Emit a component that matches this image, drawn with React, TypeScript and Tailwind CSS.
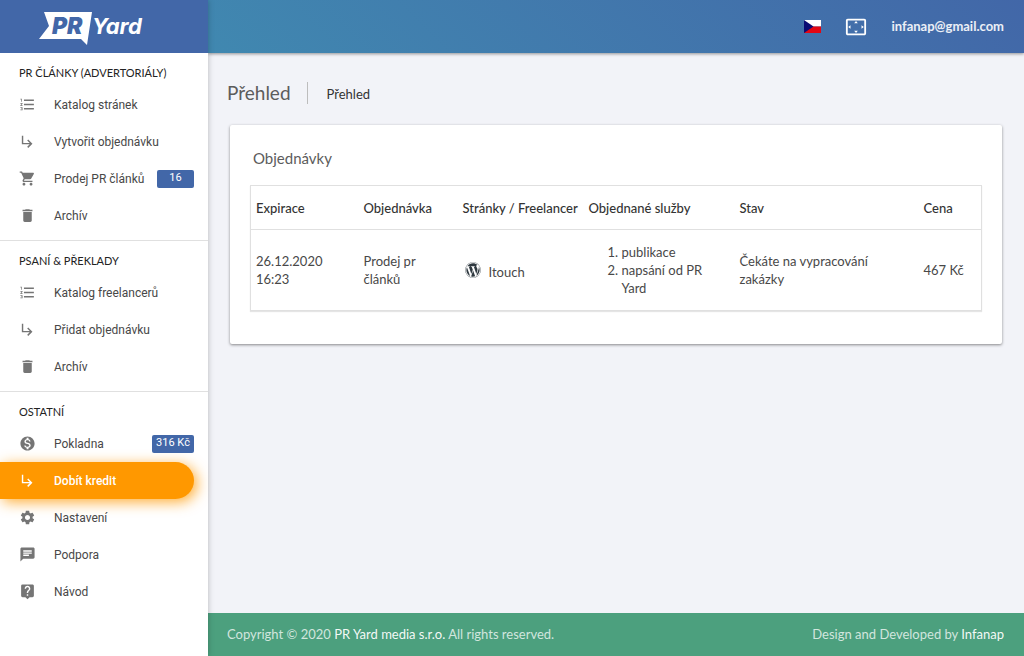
import type { ReactNode } from 'react';
import { FaWordpress } from 'react-icons/fa';
import {
  MdChat,
  MdDelete,
  MdFormatListNumbered,
  MdLiveHelp,
  MdMonetizationOn,
  MdSettings,
  MdSettingsOverscan,
  MdShoppingCart,
  MdSubdirectoryArrowRight,
} from 'react-icons/md';

interface MenuItem {
  label: string;
  icon: ReactNode;
  badge?: string;
  active?: boolean;
}

interface MenuGroup {
  title: string;
  items: MenuItem[];
}

const menu: MenuGroup[] = [
  {
    title: 'PR ČLÁNKY (ADVERTORIÁLY)',
    items: [
      { label: 'Katalog stránek', icon: <MdFormatListNumbered size={17} /> },
      { label: 'Vytvořit objednávku', icon: <MdSubdirectoryArrowRight size={17} /> },
      { label: 'Prodej PR článků', icon: <MdShoppingCart size={17} />, badge: '16' },
      { label: 'Archív', icon: <MdDelete size={17} /> },
    ],
  },
  {
    title: 'PSANÍ & PŘEKLADY',
    items: [
      { label: 'Katalog freelancerů', icon: <MdFormatListNumbered size={17} /> },
      { label: 'Přidat objednávku', icon: <MdSubdirectoryArrowRight size={17} /> },
      { label: 'Archív', icon: <MdDelete size={17} /> },
    ],
  },
  {
    title: 'OSTATNÍ',
    items: [
      { label: 'Pokladna', icon: <MdMonetizationOn size={17} />, badge: '316 Kč' },
      { label: 'Dobít kredit', icon: <MdSubdirectoryArrowRight size={17} />, active: true },
      { label: 'Nastavení', icon: <MdSettings size={17} /> },
      { label: 'Podpora', icon: <MdChat size={17} /> },
      { label: 'Návod', icon: <MdLiveHelp size={17} /> },
    ],
  },
];

function Logo() {
  return (
    <svg width="104" height="34" viewBox="0 0 104 34" role="img" aria-label="PR Yard">
      <path d="M5 0H53L48 33L42 27H0L10 14Z" fill="#fff" />
      <text x="13" y="22" fontFamily="Inter, sans-serif" fontSize="23" fontWeight="900" fontStyle="italic" fill="#4267a8">
        PR
      </text>
      <text x="53" y="22" fontFamily="Inter, sans-serif" fontSize="22" fontWeight="700" fontStyle="italic" fill="#fff">
        Yard
      </text>
    </svg>
  );
}

function CzechFlag() {
  return (
    <svg width="17" height="13" viewBox="0 0 17 13" role="img" aria-label="Čeština">
      <path d="M0 0h17v6.5H0z" fill="#fff" />
      <path d="M0 6.5h17V13H0z" fill="#e30613" />
      <path d="M0 0l9.500 6.500L0 13z" fill="#0b0b73" />
    </svg>
  );
}

function Sidebar() {
  return (
    <aside className="z-10 flex w-52 shrink-0 flex-col bg-white shadow-[0_0_6px_rgba(0,0,0,0.25)]">
      <a href="#" className="flex h-[53px] items-center bg-[#4267a8] pt-1 pl-[39px]">
        <Logo />
      </a>
      <nav className="divide-y divide-[#e0e0e0]">
        {menu.map((group) => (
          <div key={group.title} className="pb-[6px]">
            <h2 className="flex h-[33px] items-center pt-2 pl-[19px] text-[11px] text-[#222]">{group.title}</h2>
            <ul className="font-['Roboto','Open_Sans',sans-serif]">
              {group.items.map((item) => (
                <li key={item.label}>
                  <a
                    href="#"
                    className={
                      item.active
                        ? 'mr-[14px] flex h-[37px] items-center rounded-r-full bg-[#ff9800] pl-[19px] text-[12px] font-medium text-white shadow-[3px_3px_14px_rgba(255,152,0,0.8)]'
                        : 'mr-[14px] flex h-[37px] items-center pl-[19px] text-[12px] text-[#484848]'
                    }
                  >
                    <span className={item.active ? 'w-[35px] text-white' : 'w-[35px] text-[#757575]'}>{item.icon}</span>
                    {item.label}
                    {item.badge && (
                      <span
                        className={
                          item.badge.length > 2
                            ? 'ml-auto flex h-[18px] w-[42px] items-center justify-center rounded-xs bg-[#4267a8] text-[11px] text-white'
                            : 'ml-auto flex h-[18px] w-[37px] items-center justify-center rounded-xs bg-[#4267a8] text-[11px] text-white'
                        }
                      >
                        {item.badge}
                      </span>
                    )}
                  </a>
                </li>
              ))}
            </ul>
          </div>
        ))}
      </nav>
    </aside>
  );
}

function OrdersTable() {
  return (
    <table className="w-full table-fixed border-collapse border border-[#e0e0e0] text-left text-[13px] leading-[18px] text-[#484848] shadow-[0_1px_1px_rgba(0,0,0,0.1)]">
      <thead className="text-[#333]">
        <tr className="h-11 border-b border-[#e0e0e0]">
          <th className="w-[108px] px-[5px] font-medium">Expirace</th>
          <th className="w-[99px] px-[5px] font-medium">Objednávka</th>
          <th className="w-[126px] px-[5px] font-medium whitespace-nowrap">Stránky / Freelancer</th>
          <th className="w-[151px] px-[5px] font-medium">Objednané služby</th>
          <th className="px-[5px] font-medium">Stav</th>
          <th className="w-[63px] px-[5px] font-medium">Cena</th>
        </tr>
      </thead>
      <tbody>
        <tr className="h-[81px]">
          <td className="px-[5px]">
            26.12.2020
            <br />
            16:23
          </td>
          <td className="px-[5px]">
            Prodej pr
            <br />
            článků
          </td>
          <td className="px-[5px]">
            <a href="#" className="flex items-center gap-2 pl-[2px]">
              <FaWordpress size={16} className="text-[#2f3940]" />
              <span className="pt-1">Itouch</span>
            </a>
          </td>
          <td className="px-[5px]">
            <ol className="list-decimal pr-6 pl-[33px]">
              <li>publikace</li>
              <li>napsání od PR Yard</li>
            </ol>
          </td>
          <td className="pr-10 pl-[5px]">Čekáte na vypracování zakázky</td>
          <td className="px-[5px]">467 Kč</td>
        </tr>
      </tbody>
    </table>
  );
}

export default function App() {
  return (
    <div className="flex min-h-screen bg-[#f2f3f8] font-['Lato','Open_Sans',sans-serif]">
      <Sidebar />
      <div className="flex min-w-0 flex-1 flex-col">
        <header className="flex h-[53px] shrink-0 items-center justify-end gap-6 bg-linear-45 from-[#4088b0] to-[#4267a8] pr-5 text-white shadow-[0_1px_3px_rgba(0,0,0,0.4)]">
          <button type="button" aria-label="Jazyk">
            <CzechFlag />
          </button>
          <button type="button" aria-label="Celá obrazovka">
            <MdSettingsOverscan size={22} />
          </button>
          <a href="#" className="text-[13px] font-bold text-white/90">
            infanap@gmail.com
          </a>
        </header>

        <main className="flex-1">
          <div className="flex h-[72px] items-center pt-2 pl-[19px]">
            <h1 className="border-r border-[#bdbdbd] pr-4 text-[19px] leading-[22px] text-[#5c5c5c]">Přehled</h1>
            <span className="pt-1 pl-[19px] text-[13px] text-[#333]">Přehled</span>
          </div>
          <section className="mx-[22px] rounded-xs bg-white px-5 pb-[33px] shadow-[0_1px_3px_rgba(0,0,0,0.45)]">
            <h2 className="flex h-[60px] items-center pt-[6px] pl-[3px] text-[15px] text-[#5c5c5c]">Objednávky</h2>
            <OrdersTable />
          </section>
        </main>

        <footer className="flex h-[43px] items-center justify-between bg-[#4ca07e] pr-5 pl-[19px] text-[13px] text-white/75">
          <span>
            Copyright © 2020{' '}
            <a href="#" className="text-white/95">
              PR Yard media s.r.o.
            </a>{' '}
            All rights reserved.
          </span>
          <span>
            Design and Developed by{' '}
            <a href="#" className="text-white/95">
              Infanap
            </a>
          </span>
        </footer>
      </div>
    </div>
  );
}
